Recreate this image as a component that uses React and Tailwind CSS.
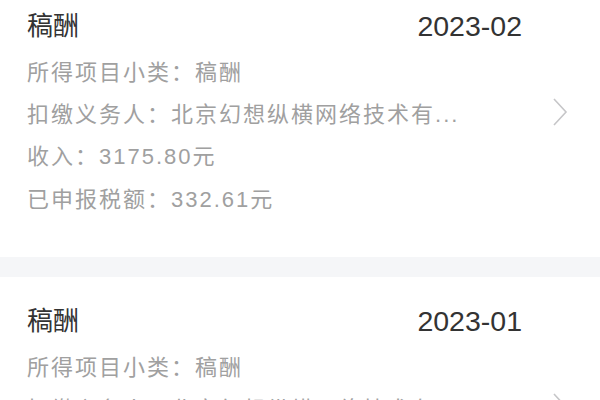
import React from "react";

const records = [
  {
    title: "稿酬",
    month: "2023-02",
    sub: "稿酬",
    payer: "北京幻想纵横网络技术有...",
    income: "3175.80元",
    tax: "332.61元",
  },
  {
    title: "稿酬",
    month: "2023-01",
    sub: "稿酬",
    payer: "北京幻想纵横网络技术有...",
    income: "3175.80元",
    tax: "332.61元",
  },
];

function Chevron() {
  return (
    <svg width="16" height="30" viewBox="0 0 16 30" className="shrink-0 -mt-[6px]">
      <path d="M2 2 L14 15 L2 28" fill="none" stroke="#c6c6c8" strokeWidth="1.6" />
    </svg>
  );
}

function RecordCard({ item }) {
  return (
    <div className="bg-white pl-[27px] pr-[32px] pt-[26px] pb-[35px]">
      <div className="flex items-center justify-between h-[36px] text-[#333333] mr-[46px]">
        <span className="text-[26px] leading-[36px]">{item.title}</span>
        <span className="text-[28.5px] leading-[36px]">{item.month}</span>
      </div>
      <div className="mt-2 text-[22px] tracking-[2px] text-[#a0a0a0]">
        <div className="leading-[42px]">所得项目小类：{item.sub}</div>
        <div className="flex items-center justify-between leading-[42px]">
          <span className="truncate">扣缴义务人：{item.payer}</span>
          <Chevron />
        </div>
        <div className="leading-[42px]">收入：{item.income}</div>
        <div className="leading-[44px]">已申报税额：{item.tax}</div>
      </div>
    </div>
  );
}

export default function App() {
  return (
    <div
      className="w-[600px] h-[400px] overflow-hidden bg-[#f5f6f8]"
      style={{ fontFamily: '"Liberation Sans", "Noto Sans CJK SC", sans-serif' }}
    >
      <div className="-mt-[18px] flex flex-col gap-[20px]">
        {records.map((item) => (
          <RecordCard key={item.month} item={item} />
        ))}
      </div>
    </div>
  );
}
